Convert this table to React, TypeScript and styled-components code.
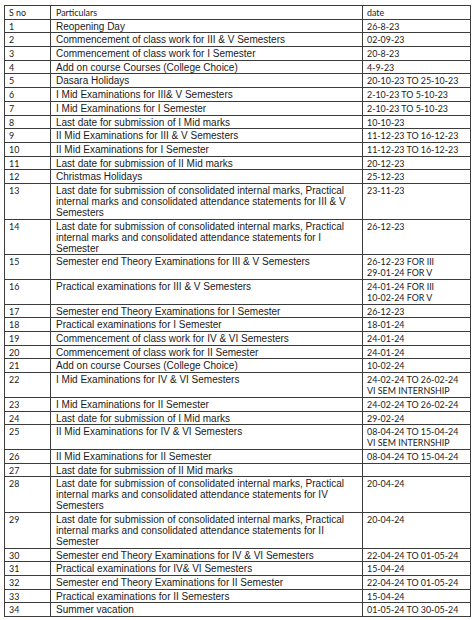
import React from "react";
import styled, { createGlobalStyle } from "styled-components";

const Global = createGlobalStyle`
  html, body { margin: 0; padding: 0; background: #fff; }
  body { width: 474px; height: 620px; overflow: hidden; }
`;

const Page = styled.div`
  padding: 5px 0 0 4px;
`;

const Table = styled.table`
  border-collapse: collapse;
  table-layout: fixed;
  width: 466px;
  border: 1.5px solid #333;
  color: #1a1a1a;
`;

const Col = styled.col<{ $w: number }>`
  width: ${(p) => p.$w}px;
`;

const Cell = styled.td<{ $kind: "num" | "text" | "date"; $head?: boolean }>`
  border: 1px solid #3c3c3c;
  vertical-align: top;
  text-align: left;
  font-weight: 400;
  padding: ${(p) => (p.$kind === "text" ? "1px 4px 0.7px 5px" : "1px 3px 0.7px 4px")};
  font-family: ${(p) =>
    p.$kind === "text" && !p.$head
      ? `"Liberation Sans", Arial, sans-serif`
      : `Lato, "Open Sans", sans-serif`};
  font-size: ${(p) => (p.$kind === "text" && !p.$head ? "10px" : "8.9px")};
  line-height: 11px;
  white-space: ${(p) => (p.$kind === "date" ? "nowrap" : "normal")};
`;

type Row = [string, string, string[]];

const rows: Row[] = [
  ["1", "Reopening Day", ["26-8-23"]],
  ["2", "Commencement of class work for III & V Semesters", ["02-09-23"]],
  ["3", "Commencement of class work for I Semester", ["20-8-23"]],
  ["4", "Add on course Courses (College Choice)", ["4-9-23"]],
  ["5", "Dasara Holidays", ["20-10-23 TO 25-10-23"]],
  ["6", "I Mid Examinations for III& V Semesters", ["2-10-23 TO 5-10-23"]],
  ["7", "I Mid Examinations for I Semester", ["2-10-23 TO 5-10-23"]],
  ["8", "Last date for submission of I Mid marks", ["10-10-23"]],
  ["9", "II Mid Examinations for III & V Semesters", ["11-12-23 TO 16-12-23"]],
  ["10", "II Mid Examinations for I Semester", ["11-12-23 TO 16-12-23"]],
  ["11", "Last date for submission of II Mid marks", ["20-12-23"]],
  ["12", "Christmas Holidays", ["25-12-23"]],
  [
    "13",
    "Last date for submission of consolidated internal marks, Practical internal marks and consolidated attendance statements for III & V Semesters",
    ["23-11-23"],
  ],
  [
    "14",
    "Last date for submission of consolidated internal marks, Practical internal marks and consolidated attendance statements for I Semester",
    ["26-12-23"],
  ],
  ["15", "Semester end Theory Examinations for III & V Semesters", ["26-12-23 FOR III", "29-01-24 FOR V"]],
  ["16", "Practical examinations for III & V Semesters", ["24-01-24 FOR III", "10-02-24 FOR V"]],
  ["17", "Semester end Theory Examinations for I Semester", ["26-12-23"]],
  ["18", "Practical examinations for I Semester", ["18-01-24"]],
  ["19", "Commencement of class work for IV & VI Semesters", ["24-01-24"]],
  ["20", "Commencement of class work for II Semester", ["24-01-24"]],
  ["21", "Add on course Courses (College Choice)", ["10-02-24"]],
  ["22", "I Mid Examinations for IV & VI Semesters", ["24-02-24 TO 26-02-24", "VI SEM INTERNSHIP"]],
  ["23", "I Mid Examinations for II Semester", ["24-02-24 TO 26-02-24"]],
  ["24", "Last date for submission of I Mid marks", ["29-02-24"]],
  ["25", "II Mid Examinations for IV & VI Semesters", ["08-04-24 TO 15-04-24", "VI SEM INTERNSHIP"]],
  ["26", "II Mid Examinations for II Semester", ["08-04-24 TO 15-04-24"]],
  ["27", "Last date for submission of II Mid marks", []],
  [
    "28",
    "Last date for submission of consolidated internal marks, Practical internal marks and consolidated attendance statements for IV Semesters",
    ["20-04-24"],
  ],
  [
    "29",
    "Last date for submission of consolidated internal marks, Practical internal marks and consolidated attendance statements for II Semester",
    ["20-04-24"],
  ],
  ["30", "Semester end Theory Examinations for IV & VI Semesters", ["22-04-24 TO 01-05-24"]],
  ["31", "Practical examinations for IV& VI Semesters", ["15-04-24"]],
  ["32", "Semester end Theory Examinations for II Semester", ["22-04-24 TO 01-05-24"]],
  ["33", "Practical examinations for II Semesters", ["15-04-24"]],
  ["34", "Summer vacation", ["01-05-24 TO 30-05-24"]],
];

export default function App() {
  return (
    <Page>
      <Global />
      <Table>
        <colgroup>
          <Col $w={46} />
          <Col $w={312} />
          <Col $w={108} />
        </colgroup>
        <thead>
          <tr>
            <Cell as="th" $kind="num" $head>
              S no
            </Cell>
            <Cell as="th" $kind="text" $head>
              Particulars
            </Cell>
            <Cell as="th" $kind="date" $head>
              date
            </Cell>
          </tr>
        </thead>
        <tbody>
          {rows.map(([no, text, dates]) => (
            <tr key={no}>
              <Cell $kind="num">{no}</Cell>
              <Cell $kind="text">{text}</Cell>
              <Cell $kind="date">
                {dates.map((d, i) => (
                  <React.Fragment key={i}>
                    {i > 0 && <br />}
                    {d}
                  </React.Fragment>
                ))}
              </Cell>
            </tr>
          ))}
        </tbody>
      </Table>
    </Page>
  );
}
